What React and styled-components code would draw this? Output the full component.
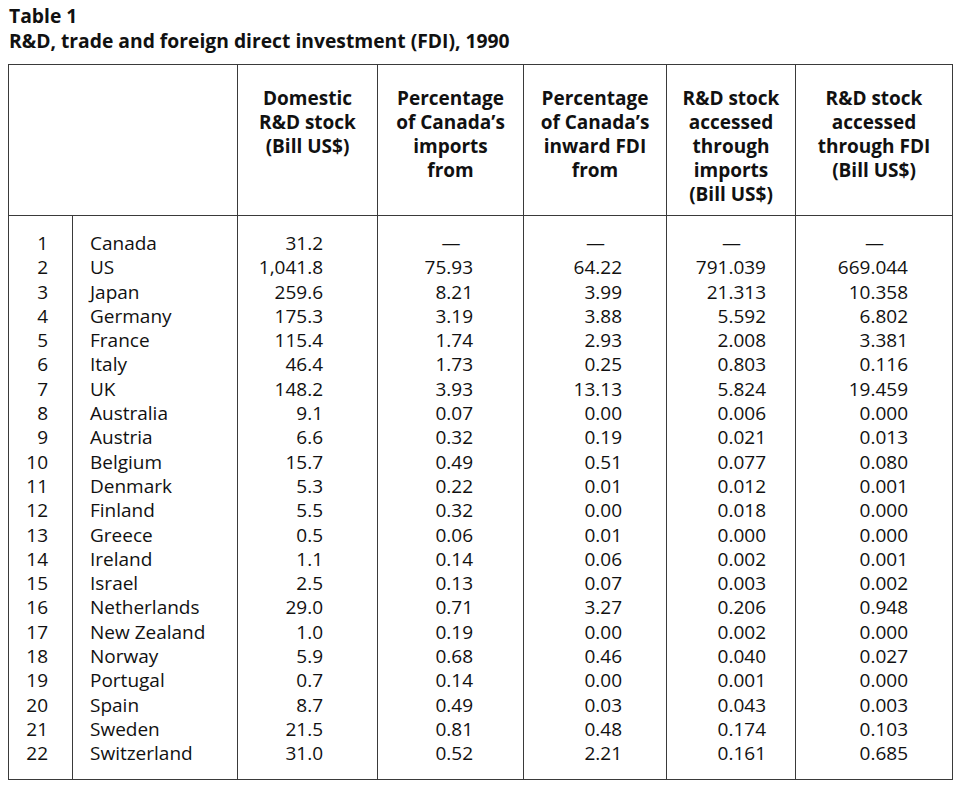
import styled, { createGlobalStyle } from "styled-components";

const rows = [
  ["1", "Canada", "31.2", null, null, null, null],
  ["2", "US", "1,041.8", "75.93", "64.22", "791.039", "669.044"],
  ["3", "Japan", "259.6", "8.21", "3.99", "21.313", "10.358"],
  ["4", "Germany", "175.3", "3.19", "3.88", "5.592", "6.802"],
  ["5", "France", "115.4", "1.74", "2.93", "2.008", "3.381"],
  ["6", "Italy", "46.4", "1.73", "0.25", "0.803", "0.116"],
  ["7", "UK", "148.2", "3.93", "13.13", "5.824", "19.459"],
  ["8", "Australia", "9.1", "0.07", "0.00", "0.006", "0.000"],
  ["9", "Austria", "6.6", "0.32", "0.19", "0.021", "0.013"],
  ["10", "Belgium", "15.7", "0.49", "0.51", "0.077", "0.080"],
  ["11", "Denmark", "5.3", "0.22", "0.01", "0.012", "0.001"],
  ["12", "Finland", "5.5", "0.32", "0.00", "0.018", "0.000"],
  ["13", "Greece", "0.5", "0.06", "0.01", "0.000", "0.000"],
  ["14", "Ireland", "1.1", "0.14", "0.06", "0.002", "0.001"],
  ["15", "Israel", "2.5", "0.13", "0.07", "0.003", "0.002"],
  ["16", "Netherlands", "29.0", "0.71", "3.27", "0.206", "0.948"],
  ["17", "New Zealand", "1.0", "0.19", "0.00", "0.002", "0.000"],
  ["18", "Norway", "5.9", "0.68", "0.46", "0.040", "0.027"],
  ["19", "Portugal", "0.7", "0.14", "0.00", "0.001", "0.000"],
  ["20", "Spain", "8.7", "0.49", "0.03", "0.043", "0.003"],
  ["21", "Sweden", "21.5", "0.81", "0.48", "0.174", "0.103"],
  ["22", "Switzerland", "31.0", "0.52", "2.21", "0.161", "0.685"],
];

const colWidths = [64, 165, 140, 146, 143, 129, 157];

// right padding of each numeric column, so figures line up on the right
const numPad = [54, 50, 44, 29, 44];

const headers = [
  ["Domestic", "R&D stock", "(Bill US$)"],
  ["Percentage", "of Canada’s", "imports", "from"],
  ["Percentage", "of Canada’s", "inward FDI", "from"],
  ["R&D stock", "accessed", "through", "imports", "(Bill US$)"],
  ["R&D stock", "accessed", "through FDI", "(Bill US$)"],
];

export default function App() {
  const last = rows.length - 1;
  return (
    <Page>
      <GlobalStyle />
      <Caption>
        Table 1
        <br />
        R&amp;D, trade and foreign direct investment (FDI), 1990
      </Caption>
      <Table>
        <colgroup>
          {colWidths.map((w, i) => (
            <Col key={i} $w={w} />
          ))}
        </colgroup>
        <thead>
          <tr>
            <HeadCell colSpan={2} />
            {headers.map((lines, i) => (
              <HeadCell key={i}>
                {lines.map((l, j) => (
                  <HeadLine key={j}>{l}</HeadLine>
                ))}
              </HeadCell>
            ))}
          </tr>
        </thead>
        <tbody>
          {rows.map((r, i) => {
            const edge = i === 0 ? "first" : i === last ? "last" : undefined;
            return (
              <Row key={r[0]} $edge={edge}>
                <NumCell>{r[0]}</NumCell>
                <NameCell>{r[1]}</NameCell>
                {r.slice(2).map((v, k) => (
                  <ValueCell key={k} $pad={numPad[k]} $dash={v === null}>
                    {v === null ? "—" : v}
                  </ValueCell>
                ))}
              </Row>
            );
          })}
        </tbody>
      </Table>
    </Page>
  );
}

const GlobalStyle = createGlobalStyle`
  body {
    margin: 0;
    background: #ffffff;
  }
`;

const Page = styled.div`
  width: 966px;
  height: 789px;
  padding: 3px 0 0 8px;
  box-sizing: border-box;
  font-family: "Open Sans", "DejaVu Sans", sans-serif;
  color: #111;
`;

const Caption = styled.div`
  font-size: 19.3px;
  font-weight: 700;
  line-height: 25px;
  margin-left: 1px;
  margin-bottom: 11px;
`;

const Table = styled.table`
  width: 944px;
  border-collapse: collapse;
  table-layout: fixed;
  border: 1.5px solid #3a3a3a;
  font-size: 19px;
`;

const Col = styled.col`
  width: ${(p) => p.$w}px;
`;

const HeadCell = styled.th`
  height: 151px;
  box-sizing: border-box;
  padding: 21px 0 0;
  vertical-align: top;
  text-align: center;
  font-weight: 700;
  line-height: 24px;
  border-left: 1.5px solid #3a3a3a;
  border-bottom: 1.5px solid #3a3a3a;
`;

const HeadLine = styled.div`
  white-space: nowrap;
`;

const Row = styled.tr`
  height: 24.3px;
  line-height: 24.3px;

  td {
    padding-top: ${(p) => (p.$edge === "first" ? "15px" : "0")};
    padding-bottom: ${(p) => (p.$edge === "last" ? "13px" : "0")};
  }
`;

const NumCell = styled.td`
  text-align: right;
  padding-right: 24px;
  border-right: 1px solid #3a3a3a;
`;

const NameCell = styled.td`
  padding-left: 17px;
  white-space: nowrap;
`;

const ValueCell = styled.td`
  border-left: 1.5px solid #3a3a3a;
  text-align: ${(p) => (p.$dash ? "center" : "right")};
  padding-right: ${(p) => (p.$dash ? 0 : p.$pad)}px;
  white-space: nowrap;
`;
